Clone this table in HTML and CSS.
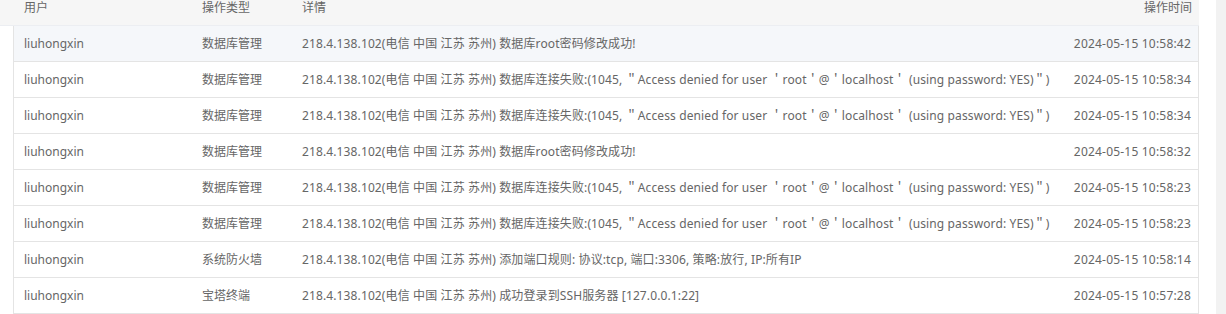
FILE: index.html
```html
<!DOCTYPE html>
<html lang="zh-CN">
<head>
<meta charset="utf-8">
<link rel="stylesheet" href="styles.css">
</head>
<body>
<div class="page">
  <div class="logs">
    <div class="head">
      <div class="c user">用户</div>
      <div class="c type">操作类型</div>
      <div class="c detail">详情</div>
      <div class="c time">操作时间</div>
    </div>
    <div class="body">
      <div class="row hover">
        <div class="c user">liuhongxin</div>
        <div class="c type">数据库管理</div>
        <div class="c detail">218.4.138.102(电信 中国 江苏 苏州) 数据库root密码修改成功!</div>
        <div class="c time">2024-05-15 10:58:42</div>
      </div>
      <div class="row">
        <div class="c user">liuhongxin</div>
        <div class="c type">数据库管理</div>
        <div class="c detail">218.4.138.102(电信 中国 江苏 苏州) 数据库连接失败:(1045, ＂Access denied for user ＇root＇@＇localhost＇ (using password: YES)＂)</div>
        <div class="c time">2024-05-15 10:58:34</div>
      </div>
      <div class="row">
        <div class="c user">liuhongxin</div>
        <div class="c type">数据库管理</div>
        <div class="c detail">218.4.138.102(电信 中国 江苏 苏州) 数据库连接失败:(1045, ＂Access denied for user ＇root＇@＇localhost＇ (using password: YES)＂)</div>
        <div class="c time">2024-05-15 10:58:34</div>
      </div>
      <div class="row">
        <div class="c user">liuhongxin</div>
        <div class="c type">数据库管理</div>
        <div class="c detail">218.4.138.102(电信 中国 江苏 苏州) 数据库root密码修改成功!</div>
        <div class="c time">2024-05-15 10:58:32</div>
      </div>
      <div class="row">
        <div class="c user">liuhongxin</div>
        <div class="c type">数据库管理</div>
        <div class="c detail">218.4.138.102(电信 中国 江苏 苏州) 数据库连接失败:(1045, ＂Access denied for user ＇root＇@＇localhost＇ (using password: YES)＂)</div>
        <div class="c time">2024-05-15 10:58:23</div>
      </div>
      <div class="row">
        <div class="c user">liuhongxin</div>
        <div class="c type">数据库管理</div>
        <div class="c detail">218.4.138.102(电信 中国 江苏 苏州) 数据库连接失败:(1045, ＂Access denied for user ＇root＇@＇localhost＇ (using password: YES)＂)</div>
        <div class="c time">2024-05-15 10:58:23</div>
      </div>
      <div class="row">
        <div class="c user">liuhongxin</div>
        <div class="c type">系统防火墙</div>
        <div class="c detail">218.4.138.102(电信 中国 江苏 苏州) 添加端口规则: 协议:tcp, 端口:3306, 策略:放行, IP:所有IP</div>
        <div class="c time">2024-05-15 10:58:14</div>
      </div>
      <div class="row">
        <div class="c user">liuhongxin</div>
        <div class="c type">宝塔终端</div>
        <div class="c detail">218.4.138.102(电信 中国 江苏 苏州) 成功登录到SSH服务器 [127.0.0.1:22]</div>
        <div class="c time">2024-05-15 10:57:28</div>
      </div>
    </div>
  </div>
  <div class="track"></div>
</div>
</body>
</html>
```

FILE: styles.css
```css
* { box-sizing: border-box; }
html, body { margin: 0; padding: 0; background: #fff; }
body {
  font-family: "Noto Sans", "Noto Sans CJK SC", sans-serif;
  font-size: 12px;
  color: #666;
}
.page {
  display: flex;
  width: 1226px;
  height: 314px;
  overflow: hidden;
}
.logs {
  width: 1199px;
  flex: none;
}
.head {
  display: grid;
  grid-template-columns: 192px 100px 1fr auto;
  height: 26px;
  align-items: start;
  background: #f6f6f6;
  border-bottom: 1px solid #eceef2;
}
.head .user { padding-left: 24px; }
.body {
  margin-left: 13px;
  border-left: 1px solid #e4e4e4;
  border-right: 1px solid #e4e4e4;
}
.row {
  display: grid;
  grid-template-columns: 178px 100px 1fr auto;
  height: 36px;
  align-items: center;
  border-bottom: 1px solid #e4e4e4;
}
.row.hover { background: #f5f7fa; }
.c { white-space: nowrap; line-height: 16px; }
.row .user { padding-left: 10px; }
.type { padding-left: 10px; }
.detail { padding-left: 10px; letter-spacing: 0.12px; }
.row .time { letter-spacing: 0.2px; }
.time { padding-right: 7px; text-align: right; }
.track {
  margin-left: 17px;
  flex: 1;
  background: #f2f2f2;
}
```
